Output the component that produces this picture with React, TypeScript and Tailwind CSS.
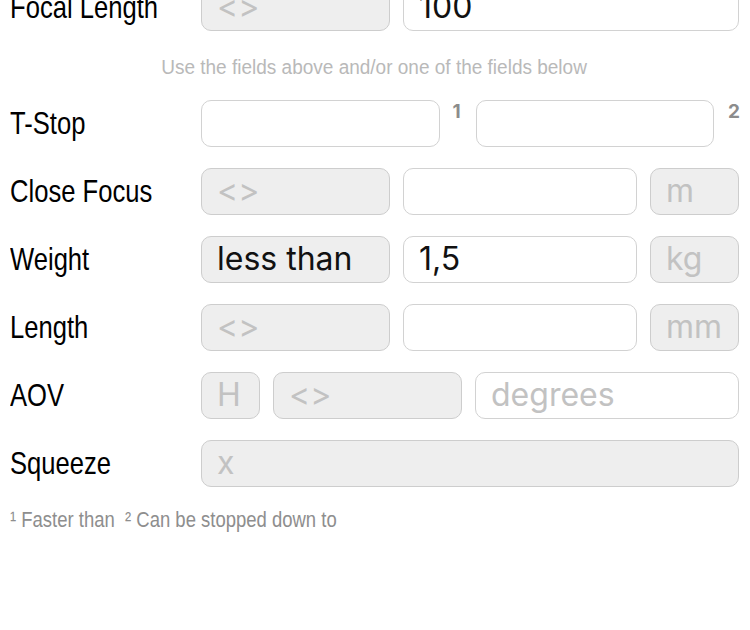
import React from "react";

const LABEL_FONT = { fontFamily: '"Liberation Sans", Arial, sans-serif' };
const FIELD_FONT = { fontFamily: 'Inter, "Liberation Sans", sans-serif' };

type BoxProps = {
  text?: string;
  gray?: boolean;
  dim?: boolean;
  className?: string;
};

function Box({ text = "", gray = false, dim = true, className = "" }: BoxProps) {
  return (
    <div
      className={
        "h-[47px] rounded-[10px] border flex items-center pl-[15px] pb-[2px] text-[32px] leading-none whitespace-nowrap overflow-hidden " +
        (gray ? "bg-[#eeeeee] border-[#cdcdcd] " : "bg-white border-[#d2d2d2] ") +
        (dim ? "text-[#c2c2c2] " : "text-[#111111] ") +
        className
      }
      style={FIELD_FONT}
    >
      {text}
    </div>
  );
}

function Row({ label, children }: { label: string; children: React.ReactNode }) {
  return (
    <div className="flex items-center h-[47px]">
      <div className="w-[191px] shrink-0 text-[32px] leading-none text-black pb-[1px]" style={LABEL_FONT}>
        <span className="inline-block origin-left scale-x-[0.8] whitespace-nowrap">{label}</span>
      </div>
      <div className="flex-1 flex items-center gap-[13px] min-w-0">{children}</div>
    </div>
  );
}

function Sup({ n, className }: { n: string; className: string }) {
  return (
    <div className={"pt-[2px] text-[19px] font-bold text-[#8c8c8c] leading-none " + className} style={FIELD_FONT}>
      {n}
    </div>
  );
}

export default function App() {
  return (
    <div className="w-[750px] h-[630px] bg-white overflow-hidden">
      <div className="pl-[10px] pr-[11px] mt-[-16px]">
        <Row label="Focal Length">
          <Box gray text="<>" className="w-[189px]" />
          <Box dim={false} text="100" className="flex-1" />
        </Row>

        <div
          className="h-[69px] flex items-center justify-center pt-[2px] text-[20px] text-[#b9b9b9] leading-none"
          style={LABEL_FONT}
        >
          <span className="inline-block origin-center scale-x-[0.95] whitespace-nowrap">
            Use the fields above and/or one of the fields below
          </span>
        </div>

        <div className="flex flex-col gap-[21px]">
          <Row label="T-Stop">
            <div className="flex items-start w-full">
              <Box className="flex-1" />
              <Sup n="1" className="w-[36px] pl-[13px]" />
              <Box className="flex-1" />
              <Sup n="2" className="w-[25px] pl-[14px]" />
            </div>
          </Row>

          <Row label="Close Focus">
            <Box gray text="<>" className="w-[189px]" />
            <Box className="flex-1" />
            <Box gray text="m" className="w-[89px]" />
          </Row>

          <Row label="Weight">
            <Box gray dim={false} text="less than" className="w-[189px]" />
            <Box dim={false} text="1,5" className="flex-1" />
            <Box gray text="kg" className="w-[89px]" />
          </Row>

          <Row label="Length">
            <Box gray text="<>" className="w-[189px]" />
            <Box className="flex-1" />
            <Box gray text="mm" className="w-[89px]" />
          </Row>

          <Row label="AOV">
            <Box gray text="H" className="w-[59px]" />
            <Box gray text="<>" className="w-[189px]" />
            <Box text="degrees" className="flex-1" />
          </Row>

          <Row label="Squeeze">
            <Box gray text="x" className="flex-1" />
          </Row>
        </div>

        <div className="mt-[22px] text-[22px] text-[#8e8e8e] leading-none" style={LABEL_FONT}>
          <span className="inline-block origin-left scale-x-[0.84] whitespace-nowrap">
            ¹ Faster than&nbsp;&nbsp;² Can be stopped down to
          </span>
        </div>
      </div>
    </div>
  );
}
